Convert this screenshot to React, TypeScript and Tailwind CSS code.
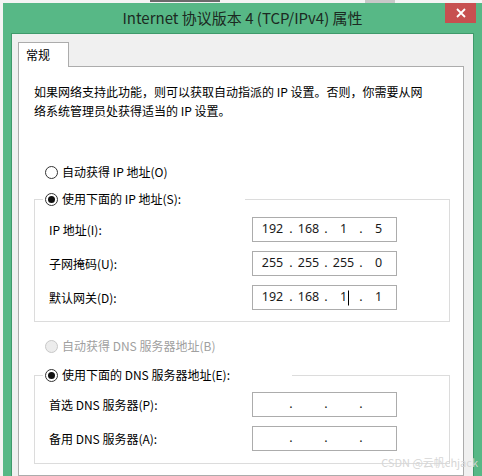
import React from "react";

const UI = { fontFamily: '"Noto Sans CJK SC", "Noto Sans", sans-serif' };
const NUM = { fontFamily: '"Noto Sans", "Liberation Sans", sans-serif' };

function Radio({ checked, disabled }: { checked?: boolean; disabled?: boolean }) {
  return (
    <span
      className={
        "relative flex h-[13px] w-[13px] shrink-0 items-center justify-center rounded-full border " +
        (disabled ? "border-[#c8c8c8] bg-[#ececec]" : "border-[#333333] bg-white")
      }
    >
      {checked && <span className="h-[7px] w-[7px] rounded-full bg-[#111111]" />}
    </span>
  );
}

function IpBox({ parts, cursor }: { parts: string[]; cursor?: boolean }) {
  const field = (t: string, i: number, w: string) => (
    <span key={"f" + i} className={"flex justify-center " + w}>
      <span className="relative">
        {t}
        {cursor && i === 2 && (
          <span className="absolute left-full top-1/2 ml-[1px] h-[15px] w-[1px] -translate-y-1/2 bg-black" />
        )}
      </span>
    </span>
  );
  const dot = (i: number) => (
    <span key={"d" + i} className="flex w-[4px] justify-center">
      .
    </span>
  );
  return (
    <div
      className="flex h-[25px] w-[145px] items-center border border-[#acacac] bg-white pl-[3px] text-[12.5px] text-[#1a1a1a]"
      style={NUM}
    >
      {field(parts[0], 0, "w-[33px]")}
      {dot(0)}
      {field(parts[1], 1, "w-[31px]")}
      {dot(1)}
      {field(parts[2], 2, "w-[31px]")}
      {dot(2)}
      {field(parts[3], 3, "w-[31px]")}
    </div>
  );
}

function Row({ label, parts, cursor }: { label: string; parts: string[]; cursor?: boolean }) {
  return (
    <div className="flex h-[25px] items-center justify-between pl-[14px] pr-[52px]">
      <span className="text-[12px] text-black">{label}</span>
      <IpBox parts={parts} cursor={cursor} />
    </div>
  );
}

export default function App() {
  return (
    <div className="relative h-[476px] w-[482px] overflow-hidden bg-[#f4f4f4]" style={UI}>
      {/* background hints */}
      <div className="absolute left-[365px] top-0 h-[3px] w-[30px] bg-[#c8c8c8]" />
      <div className="absolute left-[150px] top-0 h-[2px] w-[70px] bg-[#6a6a6a]" />

      <div className="ml-[3px] mt-[3px] flex h-[473px] w-[479px] flex-col bg-[#57b886]">
        {/* title bar */}
        <div className="relative flex h-[30px] shrink-0 items-center justify-center">
          <span className="mt-[1px] text-[15px] text-[#1c2a22]">Internet 协议版本 4 (TCP/IPv4) 属性</span>
          <div className="absolute right-[6px] top-0 flex h-[20px] w-[31px] items-center justify-center bg-[#c75050]">
            <svg width="10" height="10" viewBox="0 0 10 10">
              <path d="M1 1 L9 9 M9 1 L1 9" stroke="white" strokeWidth="1.8" />
            </svg>
          </div>
        </div>

        {/* client */}
        <div className="ml-[8px] mr-[8px] flex flex-1 flex-col border-l border-r border-t border-[#3f9a6b] bg-[#f0f0f0] pl-[6px] pr-[9px] pt-[8px]">
          <div className="relative z-10 -mb-px flex h-[25px] w-[51px] items-start border border-b-0 border-[#acacac] bg-white pl-[7px] pt-[3px] text-[12px] text-black">
            常规
          </div>
          <div className="flex flex-1 flex-col border border-[#acacac] bg-white pt-[15px]">
            <div className="pl-[15px] text-[12px] leading-[19px] text-black">
              <div>如果网络支持此功能，则可以获取自动指派的 IP 设置。否则，你需要从网</div>
              <div>络系统管理员处获得适当的 IP 设置。</div>
            </div>

            <div className="mt-[44px] flex h-[16px] items-center gap-[4px] pl-[26px] text-[12px] text-black">
              <Radio />
              <span>自动获得 IP 地址(O)</span>
            </div>

            <div className="relative ml-[15px] mr-[13px] mt-[19px] flex flex-col gap-[9px] border border-[#dcdcdc] pb-[11px] pt-[17px]">
              <div className="absolute left-[8px] top-[-9px] flex h-[16px] w-[202px] items-center gap-[4px] bg-white pl-[2px] text-[12px] text-black">
                <Radio checked />
                <span>使用下面的 IP 地址(S):</span>
              </div>
              <Row label="IP 地址(I):" parts={["192", "168", "1", "5"]} />
              <Row label="子网掩码(U):" parts={["255", "255", "255", "0"]} />
              <Row label="默认网关(D):" parts={["192", "168", "1", "1"]} cursor />
            </div>

            <div className="mt-[16px] flex h-[16px] items-center gap-[4px] pl-[26px] text-[12px] text-[#a0a0a0]">
              <Radio disabled />
              <span>自动获得 DNS 服务器地址(B)</span>
            </div>

            <div className="relative ml-[15px] mr-[13px] mt-[21px] flex flex-col gap-[9px] border border-[#dcdcdc] pb-[12px] pt-[16px]">
              <div className="absolute left-[8px] top-[-9px] flex h-[16px] w-[249px] items-center gap-[4px] bg-white pl-[2px] text-[12px] text-black">
                <Radio checked />
                <span>使用下面的 DNS 服务器地址(E):</span>
              </div>
              <Row label="首选 DNS 服务器(P):" parts={["", "", "", ""]} />
              <Row label="备用 DNS 服务器(A):" parts={["", "", "", ""]} />
            </div>
          </div>
        </div>
      </div>

      <div className="absolute bottom-[6px] right-[4px] text-[11px] text-[#d6d6d6]" style={UI}>
        CSDN @云帆chjack
      </div>
    </div>
  );
}
